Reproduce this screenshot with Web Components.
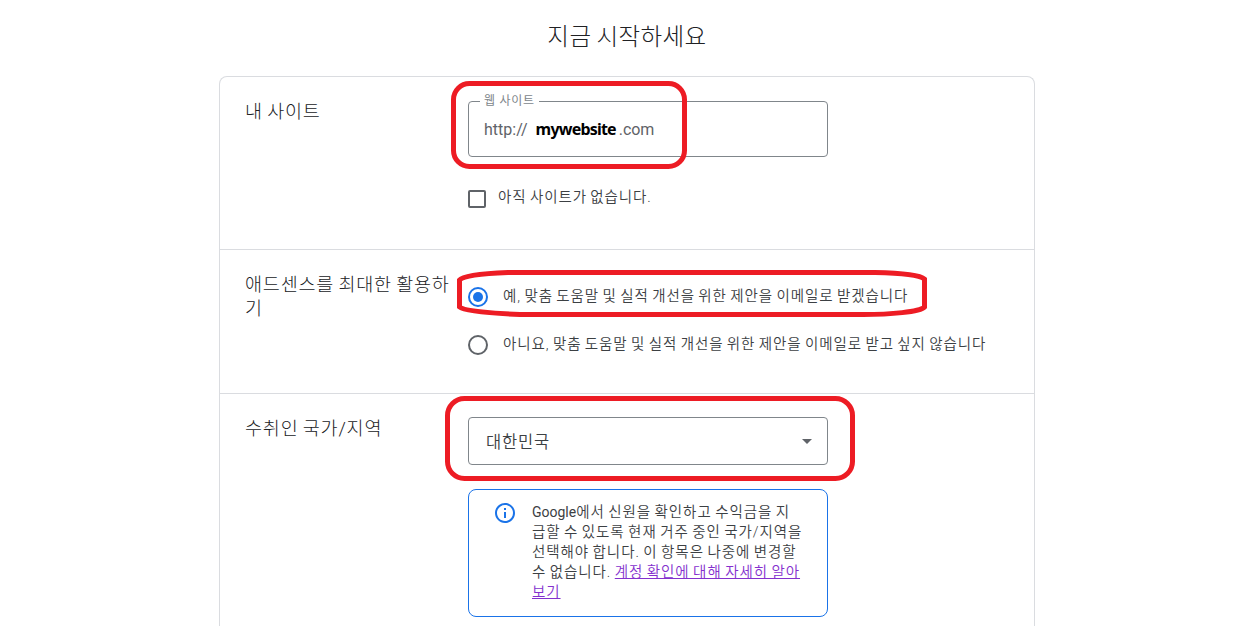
<!DOCTYPE html>
<html lang="ko">
<head>
<meta charset="utf-8">
<title>지금 시작하세요</title>
<style>
    html, body {
        margin: 0;
        height: 626px;
        overflow: hidden;
        background: #fff;
    }
    body {
        font-family: Roboto, "Noto Sans CJK KR", sans-serif;
        color: #3c4043;
        position: relative;
    }
</style>
</head>
<body>
<signup-page>
    <span slot="title">지금 시작하세요</span>
    <form-section style="height: 173px">
        <span slot="label">내 사이트</span>
        <site-field label="웹 사이트" prefix="http://" suffix=".com">mywebsite</site-field>
        <check-option style="margin-top: 30px">아직 사이트가 없습니다.</check-option>
    </form-section>
    <form-section style="height: 144px">
        <span slot="label">애드센스를 최대한 활용하기</span>
        <radio-option checked style="margin-top: 12px">예, 맞춤 도움말 및 실적 개선을 위한 제안을 이메일로 받겠습니다</radio-option>
        <radio-option style="margin-top: 24px">아니요, 맞춤 도움말 및 실적 개선을 위한 제안을 이메일로 받고 싶지 않습니다</radio-option>
    </form-section>
    <form-section style="height: 232px; border-bottom: 0">
        <span slot="label">수취인 국가/지역</span>
        <country-select>대한민국</country-select>
        <info-box><span style="letter-spacing: 0; font-size: 14px; font-weight: 400">Google</span>에서 신원을 확인하고 수익금을 지<br>급할 수 있도록 현재 거주 중인 국가/지역을<br>선택해야 합니다. 이 항목은 나중에 변경할<br>수 없습니다. <a>계정 확인에 대해 자세히 알아<br>보기</a></info-box>
    </form-section>
</signup-page>
<red-marks></red-marks>

<script>
class SignupPage extends HTMLElement {
    connectedCallback() {
        this.attachShadow({ mode: 'open' });
        this.shadowRoot.innerHTML = `
            <style>
                :host {
                    display: flex;
                    flex-direction: column;
                    align-items: center;
                    width: 1254px;
                }
                h1 {
                    margin: 0;
                    height: 76px;
                    line-height: 74px;
                    font-size: 23.5px;
                    font-weight: 300;
                    letter-spacing: 0.4px;
                    word-spacing: -1px;
                    color: #202124;
                    box-sizing: border-box;
                }
                .card {
                    width: 814px;
                    border: 1px solid #dadce0;
                    border-bottom: 0;
                    border-radius: 8px 8px 0 0;
                }
            </style>
            <h1><slot name="title"></slot></h1>
            <div class="card"><slot></slot></div>
        `;
    }
}

class FormSection extends HTMLElement {
    connectedCallback() {
        this.attachShadow({ mode: 'open' });
        this.shadowRoot.innerHTML = `
            <style>
                :host {
                    display: grid;
                    grid-template-columns: 208px 1fr;
                    column-gap: 15px;
                    padding: 23px 25px 0;
                    box-sizing: border-box;
                    border-bottom: 1px solid #dadce0;
                }
                .label {
                    margin-top: -0.5px;
                    font-size: 18.5px;
                    font-weight: 300;
                    line-height: 24px;
                    letter-spacing: 0.8px;
                    word-spacing: -1px;
                    color: #202124;
                    word-break: break-all;
                }
                .content { min-width: 0; }
            </style>
            <div class="label"><slot name="label"></slot></div>
            <div class="content"><slot></slot></div>
        `;
    }
}

class SiteField extends HTMLElement {
    connectedCallback() {
        this.attachShadow({ mode: 'open' });
        this.shadowRoot.innerHTML = `
            <style>
                :host {
                    display: flex;
                    align-items: center;
                    position: relative;
                    box-sizing: border-box;
                    width: 360px;
                    height: 56px;
                    margin-top: 1px;
                    padding: 0 15px;
                    border: 1px solid #80868b;
                    border-radius: 4px;
                    font-size: 16px;
                    color: #5f6368;
                }
                .label {
                    position: absolute;
                    left: 11px;
                    top: -10px;
                    padding: 0 4px;
                    background: #fff;
                    font-size: 12px;
                    line-height: 18px;
                    letter-spacing: 0.7px;
                    color: #80868b;
                }
                .value {
                    margin: 0 3px 0 8px;
                    font: bold 16px "Noto Sans", sans-serif;
                    letter-spacing: -0.8px;
                    color: #000;
                }
                .suffix { letter-spacing: -0.1px; }
            </style>
            <span class="label">${this.getAttribute('label')}</span>
            <span>${this.getAttribute('prefix')}</span>
            <span class="value"><slot></slot></span>
            <span class="suffix">${this.getAttribute('suffix')}</span>
        `;
    }
}

class CheckOption extends HTMLElement {
    connectedCallback() {
        this.attachShadow({ mode: 'open' });
        this.shadowRoot.innerHTML = `
            <style>
                :host {
                    display: flex;
                    gap: 12px;
                    height: 22px;
                    font-size: 14.5px;
                    font-weight: 350;
                    line-height: 22px;
                    letter-spacing: 0.9px;
                    word-spacing: -1px;
                }
                .box {
                    box-sizing: border-box;
                    width: 18px;
                    height: 18px;
                    margin-top: 3px;
                    border: 2px solid #5f6368;
                    border-radius: 2px;
                }
            </style>
            <span class="box"></span>
            <span><slot></slot></span>
        `;
    }
}

class RadioOption extends HTMLElement {
    connectedCallback() {
        this.attachShadow({ mode: 'open' });
        this.shadowRoot.innerHTML = `
            <style>
                :host {
                    display: flex;
                    gap: 15px;
                    height: 24px;
                    font-size: 14.5px;
                    font-weight: 350;
                    line-height: 23px;
                    letter-spacing: 0.91px;
                    word-spacing: -1px;
                    white-space: nowrap;
                }
                .ring {
                    display: grid;
                    place-items: center;
                    box-sizing: border-box;
                    width: 20px;
                    height: 20px;
                    margin-top: 2px;
                    border: 2px solid #5f6368;
                    border-radius: 50%;
                }
                :host([checked]) .ring { border-color: #1a73e8; }
                :host([checked]) .ring::after {
                    content: "";
                    width: 10px;
                    height: 10px;
                    border-radius: 50%;
                    background: #1a73e8;
                }
            </style>
            <span class="ring"></span>
            <span><slot></slot></span>
        `;
    }
}

class CountrySelect extends HTMLElement {
    connectedCallback() {
        this.attachShadow({ mode: 'open' });
        this.shadowRoot.innerHTML = `
            <style>
                :host {
                    display: flex;
                    align-items: center;
                    justify-content: space-between;
                    box-sizing: border-box;
                    width: 360px;
                    height: 48px;
                    padding: 0 15px 0 17px;
                    border: 1px solid #80868b;
                    border-radius: 4px;
                    font-size: 16.5px;
                    font-weight: 350;
                    letter-spacing: 0.8px;
                }
                svg { display: block; }
            </style>
            <span><slot></slot></span>
            <svg width="10" height="5" viewBox="0 0 10 5"><path d="M0 0h10L5 5z" fill="#5f6368"/></svg>
        `;
    }
}

class InfoBox extends HTMLElement {
    connectedCallback() {
        this.attachShadow({ mode: 'open' });
        this.shadowRoot.innerHTML = `
            <style>
                :host {
                    display: flex;
                    gap: 15.5px;
                    box-sizing: border-box;
                    width: 360px;
                    height: 128px;
                    margin-top: 24px;
                    padding: 11px 0 0 23.5px;
                    border: 1px solid #1a73e8;
                    border-radius: 8px;
                    font-size: 14.5px;
                    font-weight: 350;
                    line-height: 20px;
                    letter-spacing: 0.94px;
                    word-spacing: -1px;
                    white-space: nowrap;
                }
                svg { flex: none; }
                .text { padding-top: 1px; }
                ::slotted(a) {
                    color: #8430ce;
                    text-decoration: underline;
                }
            </style>
            <svg width="24" height="24" viewBox="0 0 24 24" fill="#1a73e8"><path d="M11 7h2v2h-2zm0 4h2v6h-2zm1-9C6.48 2 2 6.48 2 12s4.48 10 10 10 10-4.48 10-10S17.52 2 12 2zm0 18c-4.41 0-8-3.59-8-8s3.59-8 8-8 8 3.59 8 8-3.59 8-8 8z"/></svg>
            <div class="text"><slot></slot></div>
        `;
    }
}

// hand drawn outlines that lie over the form
class RedMarks extends HTMLElement {
    connectedCallback() {
        this.attachShadow({ mode: 'open' });
        this.shadowRoot.innerHTML = `
            <style>
                :host {
                    position: absolute;
                    left: 0;
                    top: 0;
                    pointer-events: none;
                }
                svg { display: block; }
            </style>
            <svg width="1258" height="626" fill="none" stroke="#ed1c24" stroke-width="5">
                <rect x="453.5" y="83.5" width="231" height="83" rx="16"/>
                <path d="M508 272.5H875C898 273 920 275 924.5 279V307C920 312 890 314.5 863 314.5H520C495 313.5 464 311 459.5 307V280C463 275.5 485 273.5 508 272.5Z"/>
                <rect x="447.5" y="398.5" width="405" height="80" rx="17"/>
            </svg>
        `;
    }
}

customElements.define('signup-page', SignupPage);
customElements.define('form-section', FormSection);
customElements.define('site-field', SiteField);
customElements.define('check-option', CheckOption);
customElements.define('radio-option', RadioOption);
customElements.define('country-select', CountrySelect);
customElements.define('info-box', InfoBox);
customElements.define('red-marks', RedMarks);
</script>
</body>
</html>
